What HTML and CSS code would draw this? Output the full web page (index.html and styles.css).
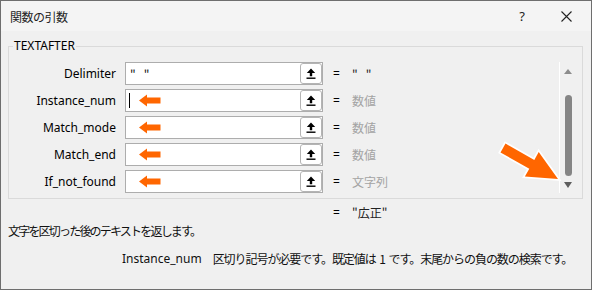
FILE: index.html
```html
<!DOCTYPE html>
<html lang="ja">
<head>
<meta charset="utf-8">
<title>関数の引数</title>
<link rel="stylesheet" href="styles.css">
</head>
<body>
<div class="dialog">
  <div class="titlebar">
    <span class="title">関数の引数</span>
    <span class="help">?</span>
    <span class="close">
      <svg width="11" height="11" viewBox="0 0 11 11"><path d="M0.5 0.5 L10.5 10.5 M10.5 0.5 L0.5 10.5" stroke="#222" stroke-width="1.1" fill="none"/></svg>
    </span>
  </div>
  <div class="body">
    <fieldset class="group">
      <legend class="group-title">TEXTAFTER</legend>
      <div class="group-inner">
        <div class="args">
          <div class="arg">
            <span class="arg-label">Delimiter</span>
            <div class="field">
              <span class="field-text quoted">"　"</span>
              <span class="ref"><svg width="10" height="11" viewBox="0 0 10 11"><path d="M5 0.5 L9.2 5 L6.2 5 L6.2 8.3 L3.8 8.3 L3.8 5 L0.8 5 Z" fill="#000"/><rect x="0.5" y="9.5" width="9" height="1.4" fill="#000"/></svg></span>
            </div>
            <span class="eq">=</span>
            <span class="val val-dark quoted">"　"</span>
          </div>
          <div class="arg">
            <span class="arg-label">Instance_num</span>
            <div class="field">
              <span class="caret"></span>
              <svg class="mini-arrow" width="22" height="13" viewBox="0 0 22 13"><path d="M0 6.5 L8 0.5 L8 3.5 L21.5 3.5 L21.5 9.5 L8 9.5 L8 12.5 Z" fill="#ff6600"/></svg>
              <span class="ref"><svg width="10" height="11" viewBox="0 0 10 11"><path d="M5 0.5 L9.2 5 L6.2 5 L6.2 8.3 L3.8 8.3 L3.8 5 L0.8 5 Z" fill="#000"/><rect x="0.5" y="9.5" width="9" height="1.4" fill="#000"/></svg></span>
            </div>
            <span class="eq">=</span>
            <span class="val">数値</span>
          </div>
          <div class="arg">
            <span class="arg-label">Match_mode</span>
            <div class="field">
              <svg class="mini-arrow" width="22" height="13" viewBox="0 0 22 13"><path d="M0 6.5 L8 0.5 L8 3.5 L21.5 3.5 L21.5 9.5 L8 9.5 L8 12.5 Z" fill="#ff6600"/></svg>
              <span class="ref"><svg width="10" height="11" viewBox="0 0 10 11"><path d="M5 0.5 L9.2 5 L6.2 5 L6.2 8.3 L3.8 8.3 L3.8 5 L0.8 5 Z" fill="#000"/><rect x="0.5" y="9.5" width="9" height="1.4" fill="#000"/></svg></span>
            </div>
            <span class="eq">=</span>
            <span class="val">数値</span>
          </div>
          <div class="arg">
            <span class="arg-label">Match_end</span>
            <div class="field">
              <svg class="mini-arrow" width="22" height="13" viewBox="0 0 22 13"><path d="M0 6.5 L8 0.5 L8 3.5 L21.5 3.5 L21.5 9.5 L8 9.5 L8 12.5 Z" fill="#ff6600"/></svg>
              <span class="ref"><svg width="10" height="11" viewBox="0 0 10 11"><path d="M5 0.5 L9.2 5 L6.2 5 L6.2 8.3 L3.8 8.3 L3.8 5 L0.8 5 Z" fill="#000"/><rect x="0.5" y="9.5" width="9" height="1.4" fill="#000"/></svg></span>
            </div>
            <span class="eq">=</span>
            <span class="val">数値</span>
          </div>
          <div class="arg">
            <span class="arg-label">If_not_found</span>
            <div class="field">
              <svg class="mini-arrow" width="22" height="13" viewBox="0 0 22 13"><path d="M0 6.5 L8 0.5 L8 3.5 L21.5 3.5 L21.5 9.5 L8 9.5 L8 12.5 Z" fill="#ff6600"/></svg>
              <span class="ref"><svg width="10" height="11" viewBox="0 0 10 11"><path d="M5 0.5 L9.2 5 L6.2 5 L6.2 8.3 L3.8 8.3 L3.8 5 L0.8 5 Z" fill="#000"/><rect x="0.5" y="9.5" width="9" height="1.4" fill="#000"/></svg></span>
            </div>
            <span class="eq">=</span>
            <span class="val">文字列</span>
          </div>
        </div>
        <div class="scrollbar">
          <span class="sb-up"></span>
          <span class="sb-thumb"></span>
          <span class="sb-down"></span>
        </div>
        <svg class="pointer" width="70" height="48" viewBox="0 0 70 48"><path d="M5.5 14.4 L10.5 5.6 L39.3 21.9 L43.7 14.1 L63 41 L29.9 38.5 L34.3 30.7 Z" fill="#ff6600" stroke="#ffffff" stroke-width="3.5" stroke-linejoin="miter" paint-order="stroke"/></svg>
      </div>
    </fieldset>
    <div class="result"><span class="eq">=</span><span class="val val-dark">"広正"</span></div>
    <p class="desc">文字を区切った後のテキストを返します。</p>
    <p class="arg-help"><span class="arg-help-name">Instance_num</span><span class="arg-help-text">区切り記号が必要です。既定値は 1 です。末尾からの負の数の検索です。</span></p>
  </div>
</div>
</body>
</html>
```

FILE: styles.css
```css
html, body {
  margin: 0;
  padding: 0;
  background: #f0f0f0;
}
body {
  font-family: "Noto Sans", "Noto Sans CJK JP", sans-serif;
  font-size: 12px;
  color: #000;
}
.dialog {
  box-sizing: border-box;
  width: 592px;
  height: 290px;
  border: 1px solid #6e6e6e;
  background: #f0f0f0;
  display: flex;
  flex-direction: column;
}
.titlebar {
  height: 30px;
  background: #f4f4f4;
  display: flex;
  align-items: center;
  padding-left: 9px;
  font-family: "Noto Sans CJK JP", sans-serif;
}
.title {
  font-size: 12px;
  color: #222;
  flex: 1;
  letter-spacing: -0.5px;
}
.help {
  font-family: "Noto Sans", sans-serif;
  font-size: 13px;
  color: #222;
  margin-right: 36px;
}
.close {
  display: flex;
  margin-right: 19px;
}
.body {
  padding: 7px 8px 0 7px;
}
.group {
  margin: 0;
  padding: 8px 0 5px 0;
  border: 1px solid #dadada;
  min-width: 0;
}
.group-title {
  margin-left: 4px;
  padding: 0 1px;
  font-size: 12px;
  line-height: 16px;
  color: #000;
}
.group-inner {
  position: relative;
  display: flex;
}
.args {
  flex: 1;
  display: flex;
  flex-direction: column;
  gap: 4px;
}
.arg {
  display: flex;
  align-items: center;
  height: 23px;
}
.arg-label {
  width: 107px;
  text-align: right;
  color: #000;
}
.field {
  position: relative;
  box-sizing: border-box;
  margin-left: 9px;
  width: 198px;
  height: 23px;
  border: 1px solid #adadad;
  background: #fff;
  display: flex;
  align-items: center;
}
.field-text {
  font-family: "Noto Sans CJK JP", sans-serif;
  padding-left: 4px;
  flex: 1;
  color: #111;
}
.quoted {
  letter-spacing: -2px;
}
.caret {
  position: absolute;
  left: 3px;
  top: 3px;
  width: 1px;
  height: 15px;
  background: #000;
}
.mini-arrow {
  margin-left: 13px;
  flex: none;
}
.ref {
  box-sizing: border-box;
  margin-left: auto;
  width: 22px;
  height: 21px;
  border: 1px solid #b4b4b4;
  border-radius: 3px;
  background: #fff;
  display: flex;
  align-items: center;
  justify-content: center;
}
.eq {
  margin-left: 10px;
  width: 8px;
  color: #000;
}
.val {
  margin-left: 11px;
  font-family: "Noto Sans CJK JP", sans-serif;
  color: #a3a3a3;
}
.val-dark {
  color: #222;
}
.scrollbar {
  width: 17px;
  margin-right: 6px;
  border-left: 1px solid #ffffff;
  display: flex;
  flex-direction: column;
  align-items: center;
  padding-top: 7px;
  box-sizing: border-box;
}
.sb-up {
  width: 0;
  height: 0;
  border-left: 4.5px solid transparent;
  border-right: 4.5px solid transparent;
  border-bottom: 5px solid #8c8c8c;
}
.sb-thumb {
  margin-top: 21px;
  width: 7px;
  height: 81px;
  border-radius: 4px;
  background: #858585;
}
.sb-down {
  margin-top: 6px;
  width: 0;
  height: 0;
  border-left: 4.5px solid transparent;
  border-right: 4.5px solid transparent;
  border-top: 6px solid #5e5e5e;
}
.pointer {
  position: absolute;
  left: 486px;
  top: 76px;
}
.result {
  display: flex;
  height: 16px;
  align-items: center;
  margin-top: 5px;
  padding-left: 325px;
}
.result .eq {
  margin-left: 0;
}
.desc {
  margin: 3px 0 0 0;
  line-height: 16px;
  font-family: "Noto Sans CJK JP", sans-serif;
  color: #111;
  letter-spacing: -1.8px;
  white-space: nowrap;
}
.arg-help {
  margin: 12px 0 0 114px;
  line-height: 16px;
  color: #111;
  display: flex;
  white-space: nowrap;
}
.arg-help-text {
  margin-left: 11px;
  font-family: "Noto Sans CJK JP", sans-serif;
  letter-spacing: -1.05px;
  word-spacing: 2px;
}
```
